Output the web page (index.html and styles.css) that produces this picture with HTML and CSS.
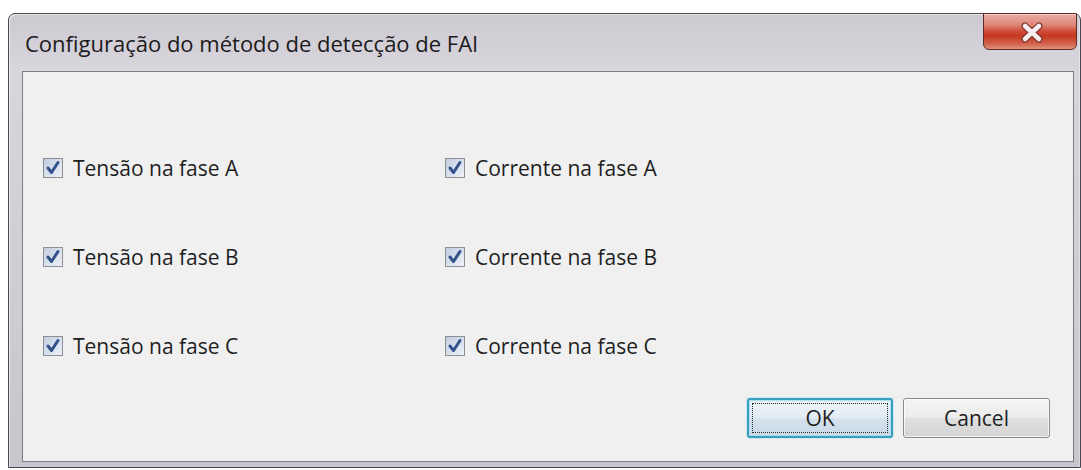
FILE: index.html
```html
<!DOCTYPE html>
<html lang="pt">
<head>
<meta charset="utf-8">
<title>Configuração do método de detecção de FAI</title>
<link rel="stylesheet" href="styles.css">
</head>
<body>
<div class="window">
  <div class="titlebar">
    <span class="title">Configuração do método de detecção de FAI</span>
    <button class="close" type="button" aria-label="Fechar">
      <svg width="24" height="21" viewBox="0 0 24 21" aria-hidden="true">
        <path d="M5 4 L19 17 M19 4 L5 17" stroke="#6b2b26" stroke-width="7" stroke-linecap="round" fill="none" opacity="0.85"/>
        <path d="M5 4 L19 17 M19 4 L5 17" stroke="#f7eef0" stroke-width="4.6" stroke-linecap="round" fill="none"/>
      </svg>
    </button>
  </div>
  <div class="client">
    <div class="options">
      <label class="opt"><span class="box"><svg width="18" height="18" viewBox="0 0 18 18"><path d="M4 9 L7.5 13.5 L14 3.5" stroke="#34528a" stroke-width="3" fill="none" stroke-linejoin="round" stroke-linecap="round"/></svg></span>Tensão na fase A</label>
      <label class="opt"><span class="box"><svg width="18" height="18" viewBox="0 0 18 18"><path d="M4 9 L7.5 13.5 L14 3.5" stroke="#34528a" stroke-width="3" fill="none" stroke-linejoin="round" stroke-linecap="round"/></svg></span>Corrente na fase A</label>
      <label class="opt"><span class="box"><svg width="18" height="18" viewBox="0 0 18 18"><path d="M4 9 L7.5 13.5 L14 3.5" stroke="#34528a" stroke-width="3" fill="none" stroke-linejoin="round" stroke-linecap="round"/></svg></span>Tensão na fase B</label>
      <label class="opt"><span class="box"><svg width="18" height="18" viewBox="0 0 18 18"><path d="M4 9 L7.5 13.5 L14 3.5" stroke="#34528a" stroke-width="3" fill="none" stroke-linejoin="round" stroke-linecap="round"/></svg></span>Corrente na fase B</label>
      <label class="opt"><span class="box"><svg width="18" height="18" viewBox="0 0 18 18"><path d="M4 9 L7.5 13.5 L14 3.5" stroke="#34528a" stroke-width="3" fill="none" stroke-linejoin="round" stroke-linecap="round"/></svg></span>Tensão na fase C</label>
      <label class="opt"><span class="box"><svg width="18" height="18" viewBox="0 0 18 18"><path d="M4 9 L7.5 13.5 L14 3.5" stroke="#34528a" stroke-width="3" fill="none" stroke-linejoin="round" stroke-linecap="round"/></svg></span>Corrente na fase C</label>
    </div>
    <div class="actions">
      <button class="btn btn-default" type="button"><span class="focus">OK</span></button>
      <button class="btn" type="button">Cancel</button>
    </div>
  </div>
</div>
</body>
</html>
```
FILE: styles.css
```css
html, body {
  margin: 0;
  padding: 0;
  width: 1081px;
  height: 470px;
  overflow: hidden;
  background: #ffffff;
}

body {
  font-family: "Open Sans", "Noto Sans", sans-serif;
  color: #1e1e1e;
}

/* Dialog frame (glass border) */
.window {
  box-sizing: border-box;
  width: 1073px;
  height: 455px;
  margin: 13px 0 0 8px;
  border: 1px solid #4a4650;
  border-radius: 7px 7px 0 0;
  padding: 0 6px 5px 13px;
  display: flex;
  flex-direction: column;
  background: linear-gradient(180deg, #cdc9d1 0%, #d8d5dc 12%, #d3d0d7 40%, #c9c5cd 100%);
  box-shadow: inset 1px 1px 0 rgba(255, 255, 255, 0.55), inset -1px 0 0 rgba(255, 255, 255, 0.35);
}

.titlebar {
  height: 57px;
  display: flex;
  align-items: center;
  justify-content: space-between;
}

.title {
  font-size: 22px;
  padding-left: 3px;
  color: #1b1b1b;
}

.close {
  align-self: flex-start;
  box-sizing: border-box;
  width: 94px;
  height: 37px;
  margin: -1px -3px 0 0;
  padding: 0;
  border: 1px solid #5e2b27;
  border-radius: 0 0 6px 6px;
  display: flex;
  align-items: center;
  justify-content: center;
  background: linear-gradient(180deg, #e9aca3 0%, #e0887a 30%, #cf4b36 50%, #c43620 62%, #d2634c 85%, #e0937f 100%);
  box-shadow: inset 0 1px 0 rgba(255, 255, 255, 0.45);
}

.close svg {
  margin-left: 4px;
  margin-top: 1px;
}

/* Client area */
.client {
  flex: 1;
  display: flex;
  flex-direction: column;
  background: #f0f0f0;
  border: 1px solid #7f7b85;
  padding: 51px 23px 23px 20px;
}

.options {
  display: grid;
  grid-template-columns: 402px auto;
  grid-auto-rows: 89px;
  align-items: center;
}

.opt {
  display: flex;
  align-items: center;
  gap: 10px;
  font-size: 21px;
  line-height: 28px;
}

.box {
  box-sizing: border-box;
  width: 20px;
  height: 20px;
  border: 1px solid #8e8f93;
  background: #f4f6fa;
  display: flex;
  align-items: center;
  justify-content: center;
  margin-top: 1px;
}

.box svg {
  width: 18px;
  height: 18px;
  background: linear-gradient(135deg, #c2cde0 0%, #d9e1ee 55%, #eef2f8 100%);
}

.actions {
  margin-top: auto;
  display: flex;
  justify-content: flex-end;
  gap: 10px;
}

.btn {
  box-sizing: border-box;
  width: 147px;
  height: 40px;
  padding: 0;
  border: 1px solid #8a8a8a;
  border-radius: 3px;
  font-family: inherit;
  font-size: 21px;
  color: #1e1e1e;
  background: linear-gradient(180deg, #f4f4f4 0%, #ececec 48%, #dfdfdf 52%, #d3d3d3 100%);
  box-shadow: inset 0 0 0 1px rgba(255, 255, 255, 0.75);
  display: flex;
  align-items: center;
  justify-content: center;
}

.btn-default {
  width: 146px;
  border: 2px solid #3a9dbd;
  background: linear-gradient(180deg, #edf3f8 0%, #e3ecf4 48%, #d6e2ee 52%, #cad9e7 100%);
  box-shadow: 0 0 2px #7fd0e8, inset 0 0 0 1px #a8e2f2;
}

.focus {
  box-sizing: border-box;
  width: calc(100% - 6px);
  height: calc(100% - 6px);
  border: 1px dotted #2b2b2b;
  display: flex;
  align-items: center;
  justify-content: center;
}
```
